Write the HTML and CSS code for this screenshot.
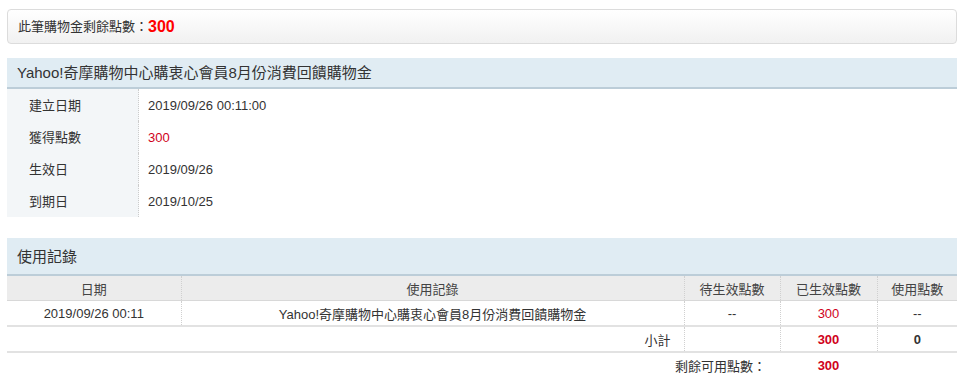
FILE: index.html
```html
<!DOCTYPE html>
<html lang="zh-Hant">
<head>
    <meta charset="UTF-8">
    <title>購物金明細</title>
    <link rel="stylesheet" href="styles.css">
</head>
<body>
    <div class="wrap">
        <div class="summary">此筆購物金剩餘點數：<b class="big">300</b></div>

        <div class="panel">
            <h3 class="panel-hd">Yahoo!奇摩購物中心購衷心會員8月份消費回饋購物金</h3>
            <dl class="info">
                <dt>建立日期</dt><dd>2019/09/26 00:11:00</dd>
                <dt>獲得點數</dt><dd class="red">300</dd>
                <dt>生效日</dt><dd>2019/09/26</dd>
                <dt>到期日</dt><dd>2019/10/25</dd>
            </dl>
        </div>

        <div class="panel">
            <h3 class="panel-hd tall">使用記錄</h3>
            <table class="log">
                <colgroup>
                    <col style="width:174px">
                    <col style="width:503px">
                    <col style="width:96px">
                    <col style="width:97px">
                    <col>
                </colgroup>
                <thead>
                    <tr>
                        <th>日期</th>
                        <th>使用記錄</th>
                        <th>待生效點數</th>
                        <th>已生效點數</th>
                        <th>使用點數</th>
                    </tr>
                </thead>
                <tbody>
                    <tr>
                        <td>2019/09/26 00:11</td>
                        <td>Yahoo!奇摩購物中心購衷心會員8月份消費回饋購物金</td>
                        <td>--</td>
                        <td class="red">300</td>
                        <td>--</td>
                    </tr>
                    <tr class="sub">
                        <td class="nosep"></td>
                        <td class="right">小計</td>
                        <td></td>
                        <td class="red strong">300</td>
                        <td class="strong">0</td>
                    </tr>
                    <tr class="total">
                        <td colspan="3" class="right">剩餘可用點數：</td>
                        <td class="red strong">300</td>
                        <td></td>
                    </tr>
                </tbody>
            </table>
        </div>
    </div>
</body>
</html>
```

FILE: styles.css
```css
/* reset */
body{
    margin: 0;
    font-family: "Liberation Sans", Arial, "Noto Sans CJK TC", sans-serif;
    font-size: 13px;
    color: #333;
    background: #fff;
}
h3,dl,dd,dt{
    margin: 0;
    padding: 0;
}
/* layout */
.wrap{
    width: 950px;
    padding: 9px 0 0 7px;
}
.red{
    color: #d0021b;
}
.strong{
    font-weight: bold;
}
.right{
    text-align: right;
}
/* summary box */
.summary{
    height: 33px;
    line-height: 33px;
    padding-left: 10px;
    border: 1px solid #dcdcdc;
    border-radius: 4px;
    background: linear-gradient(#fff, #f1f1f1);
    font-size: 13px;
}
.summary .big{
    font-size: 16px;
    color: #f00;
    vertical-align: -1px;
}
/* panels */
.panel{
    margin-top: 14px;
}
.panel + .panel{
    margin-top: 21px;
}
.panel-hd{
    height: 29px;
    line-height: 30px;
    padding-left: 10px;
    background: #e0ecf3;
    border-bottom: 2px solid #bccdd8;
    font-size: 15px;
    font-weight: normal;
    color: #333;
}
.panel-hd.tall{
    height: 36px;
    line-height: 37px;
}
/* info list */
.info{
    display: grid;
    grid-template-columns: 132px 1fr;
}
.info dt{
    height: 32px;
    line-height: 33px;
    padding-left: 22px;
    background: #f3f6f8;
    border-right: 1px dotted #ccc;
}
.info dd{
    height: 32px;
    line-height: 33px;
    padding-left: 9px;
}
/* log table */
.log{
    width: 950px;
    border-collapse: collapse;
    table-layout: fixed;
}
.log th{
    height: 24px;
    background: #ececec;
    border-bottom: 1px solid #d8d8d8;
    font-weight: normal;
    color: #444;
}
.log th,
.log td{
    padding: 0;
    text-align: center;
    border-left: 1px dotted #d0d0d0;
}
.log th:first-child,
.log td:first-child{
    border-left: none;
}
.log td{
    height: 24px;
    border-bottom: 2px solid #e2e2e2;
}
.log td.right{
    text-align: right;
    padding-right: 13px;
}
.log .sub td.nosep + td{
    border-left: none;
}
.log .total td{
    border: none;
    height: 24px;
}
.log .total td.right{
    padding-right: 14px;
}
```
